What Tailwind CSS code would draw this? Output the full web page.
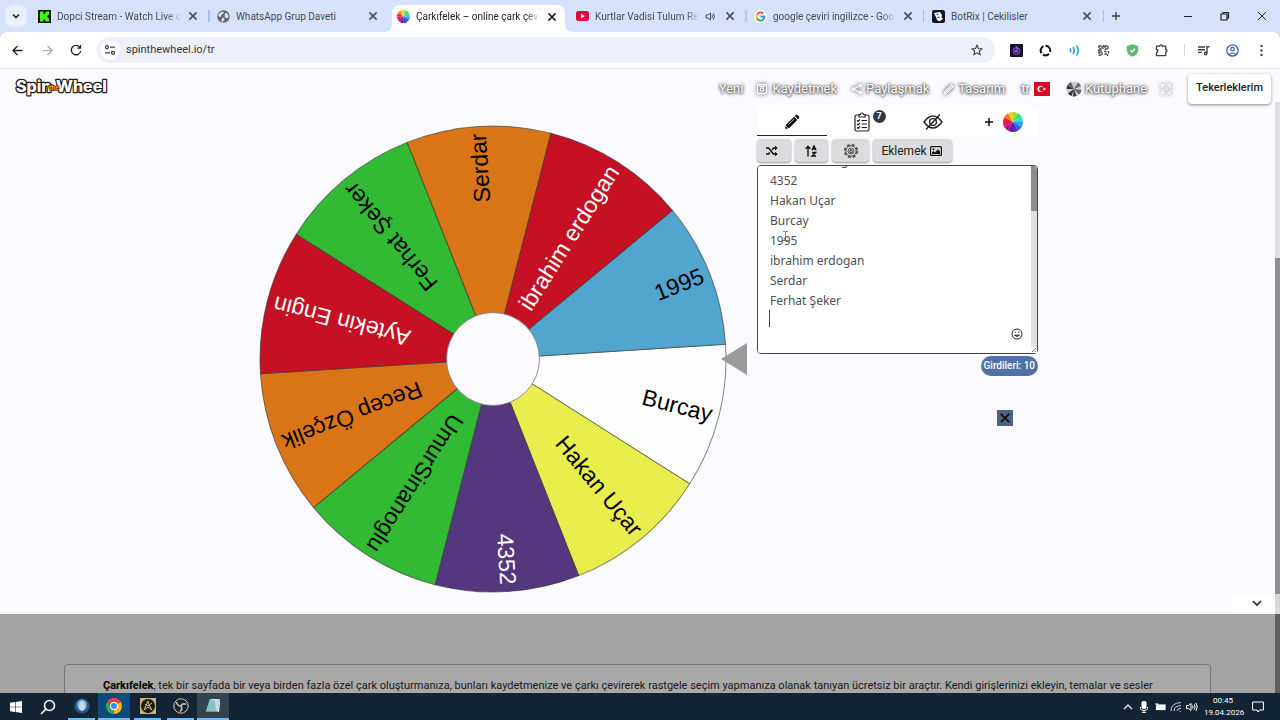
<!DOCTYPE html>
<html lang="tr">
<head>
    <meta charset="UTF-8">
    <meta name="viewport" content="width=device-width, initial-scale=1.0">
    <title>Çarkıfelek – online çark çevirme</title>
    <script src="https://cdn.jsdelivr.net/npm/@tailwindcss/browser@4"></script>
</head>
<body class="h-screen flex flex-col overflow-hidden bg-[#fafaff] font-['Roboto',sans-serif] text-[#202124]">

    <!-- shared shapes -->
    <svg class="hidden">
        <symbol id="x" viewBox="0 0 10 10"><path d="M2 2l6 6M8 2l-6 6" stroke="currentColor" stroke-width="1.3" fill="none"/></symbol>
        <symbol id="pie" viewBox="-10 -10 20 20">
            <path d="M0 0L0-10A10 10 0 0 1 5-8.66Z" fill="#9be22d"/>
            <path d="M0 0L5-8.66A10 10 0 0 1 8.66-5Z" fill="#35e07a"/>
            <path d="M0 0L8.66-5A10 10 0 0 1 10 0Z" fill="#28d8e8"/>
            <path d="M0 0L10 0A10 10 0 0 1 8.66 5Z" fill="#2f9df4"/>
            <path d="M0 0L8.66 5A10 10 0 0 1 5 8.66Z" fill="#2f62e8"/>
            <path d="M0 0L5 8.66A10 10 0 0 1 0 10Z" fill="#4a2cc8"/>
            <path d="M0 0L0 10A10 10 0 0 1-5 8.66Z" fill="#6d1a9c"/>
            <path d="M0 0L-5 8.66A10 10 0 0 1-8.66 5Z" fill="#b0128c"/>
            <path d="M0 0L-8.66 5A10 10 0 0 1-10 0Z" fill="#e0146e"/>
            <path d="M0 0L-10 0A10 10 0 0 1-8.66-5Z" fill="#ea2030"/>
            <path d="M0 0L-8.66-5A10 10 0 0 1-5-8.66Z" fill="#f47b1c"/>
            <path d="M0 0L-5-8.66A10 10 0 0 1 0-10Z" fill="#f8d22a"/>
        </symbol>
    </svg>

    <div class="shrink-0 bg-[#d6e2fb]">
    <!-- Tab strip -->
    <header class="h-8 flex items-center text-[10px] text-[#474b52]">
        <button class="ml-[5px] mr-[5px] w-[22px] h-[22px] rounded-lg bg-[#e9effc] flex items-center justify-center">
            <svg class="w-3 h-3" viewBox="0 0 12 12"><path d="M3 4.5l3 3 3-3" fill="none" stroke="#202124" stroke-width="1.6"/></svg>
        </button>
        <div class="w-[176px] h-full flex items-center pl-1.5 pr-[9px] gap-1.5">
            <svg class="w-[13px] h-[13px] shrink-0" viewBox="0 0 13 13"><path fill="#061a04" d="M0 0h13v13H0z"/><path fill="#3ff51c" d="M2 1.5h3.5v2.7h1V3h1V1.5h3.7v3.2H10v1H9v1.6h1v1h1.2v3.2H7.5V10h-1V9h-1v2.5H2z"/></svg>
            <span class="flex-1 min-w-0 overflow-hidden whitespace-nowrap [mask-image:linear-gradient(to_right,#000_88%,transparent)]">Dopci Stream - Watch Live o</span>
            <button class="w-3 h-3"><svg class="w-3 h-3"><use href="#x"/></svg></button>
        </div>
        <div class="w-[184px] h-full flex items-center pl-[9px] pr-[13px] gap-1.5 relative">
            <span class="absolute left-0 w-0.5 h-3 bg-[#a9c3f5]"></span>
            <svg class="w-[13px] h-[13px] shrink-0" viewBox="0 0 13 13"><circle cx="6.5" cy="6.5" r="6.2" fill="#5f6469"/><path fill="#d6e2fb" d="M2 3.500l3-2 2 .5-1 2-2 1v1.500L2.500 7 1.200 6zM8 3l2.500.5 1.200 2.500-.7 2-2 .3-1.500-1.800zM5 7.500l2.200.5.3 2-2 2-1.200-.6z"/></svg>
            <span class="flex-1 whitespace-nowrap">WhatsApp Grup Daveti</span>
            <button class="w-3 h-3"><svg class="w-3 h-3"><use href="#x"/></svg></button>
        </div>
        <div class="relative w-[173px] h-[27px] mt-[5px] bg-white rounded-t-lg flex items-center pl-[5px] pr-[7px] pb-[4px] gap-1.5 text-[#202124]">
            <svg class="absolute -left-2 bottom-0 w-2 h-2" viewBox="0 0 8 8"><path d="M8 0v8H0q8 0 8-8z" fill="#fff"/></svg>
            <svg class="absolute -right-2 bottom-0 w-2 h-2" viewBox="0 0 8 8"><path d="M0 0v8h8q-8 0-8-8z" fill="#fff"/></svg>
            <svg class="w-[13px] h-[13px] shrink-0"><use href="#pie"/></svg>
            <span class="flex-1 min-w-0 overflow-hidden whitespace-nowrap [mask-image:linear-gradient(to_right,#000_88%,transparent)]">Çarkıfelek – online çark çevir</span>
            <button class="w-3 h-3"><svg class="w-3 h-3"><use href="#x"/></svg></button>
        </div>
        <div class="w-[180px] h-full flex items-center pl-[11px] pr-[9px] gap-1.5">
            <svg class="w-[13px] h-[10px] shrink-0" viewBox="0 0 13 10"><rect width="13" height="10" rx="2.500" fill="#e6053c"/><path fill="#fff" d="M5 2.800v4.400L9 5z"/></svg>
            <span class="flex-1 min-w-0 overflow-hidden whitespace-nowrap [mask-image:linear-gradient(to_right,#000_88%,transparent)]">Kurtlar Vadisi Tulum Rem</span>
            <svg class="w-[11px] h-[11px] shrink-0" viewBox="0 0 11 11"><path d="M1 4v3h2l2.500 2V2L3 4z" fill="none" stroke="currentColor"/><path d="M7 4q1 1.500 0 3M8.200 2.200q2.600 3.300 0 6.600" fill="none" stroke="currentColor"/></svg>
            <button class="w-3 h-3 ml-0.5"><svg class="w-3 h-3"><use href="#x"/></svg></button>
        </div>
        <div class="w-[178px] h-full flex items-center pl-[9px] pr-[9px] gap-1.5 relative">
            <span class="absolute left-0 w-0.5 h-3 bg-[#b3c8f3]"></span>
            <svg class="w-[13px] h-[13px] shrink-0" viewBox="0 0 13 13"><circle cx="6.500" cy="6.500" r="6.500" fill="#fff"/><g fill="none" stroke-width="1.900"><path d="M9.300 3.500A4 4 0 0 0 3 4.500" stroke="#ea4335"/><path d="M3 4.500a4 4 0 0 0 0 4" stroke="#fbbc05"/><path d="M3 8.500a4 4 0 0 0 6 1.200" stroke="#34a853"/><path d="M6.500 6.500h4a4 4 0 0 1-1.500 3.200" stroke="#4285f4"/></g></svg>
            <span class="flex-1 min-w-0 overflow-hidden whitespace-nowrap [mask-image:linear-gradient(to_right,#000_88%,transparent)]">google çeviri ingilizce - Goo</span>
            <button class="w-3 h-3"><svg class="w-3 h-3"><use href="#x"/></svg></button>
        </div>
        <div class="w-[178px] h-full flex items-center pl-[9px] pr-2 gap-1.5 relative">
            <span class="absolute left-0 w-px h-3 bg-[#a9bfee]"></span>
            <svg class="w-[13px] h-[13px] shrink-0" viewBox="0 0 13 13"><rect width="13" height="13" rx="2" fill="#14142b"/><path fill="#fff" d="M2 3l6-1 2 3-.5 2L11 9l-3.500 2.200-2-.7z"/><path stroke="#14142b" d="M4.500 4.500l2-.5M5.500 7.500l2-.5"/></svg>
            <span class="flex-1 whitespace-nowrap">BotRix | Cekilisler</span>
            <button class="w-3 h-3"><svg class="w-3 h-3"><use href="#x"/></svg></button>
        </div>
        <span class="w-px h-3 ml-0.5 bg-[#a9bfee]"></span>
        <button class="ml-[7px] text-[#1f4d2e]"><svg class="w-[10px] h-[10px]" viewBox="0 0 10 10"><path d="M5 1v8M1 5h8" stroke="currentColor" stroke-width="1.300"/></svg></button>
        <div class="ml-auto mr-[13px] flex items-center gap-[27px] text-[#202124]">
            <button><svg class="w-[10px] h-[10px]" viewBox="0 0 10 10"><path d="M1 5.500h8" stroke="currentColor"/></svg></button>
            <button><svg class="w-[10px] h-[10px]" viewBox="0 0 10 10"><path d="M1 3h6v6H1zM3 3V1.500h5.500V7H7" fill="none" stroke="currentColor" stroke-width="1.200"/></svg></button>
            <button><svg class="w-[10px] h-[10px]" viewBox="0 0 10 10"><path d="M1 1l8 8M9 1L1 9" stroke="currentColor"/></svg></button>
        </div>
    </header>

    <!-- Toolbar -->
    <div class="h-[37px] bg-white rounded-t-lg border-b border-[#e6e8ee] flex items-center pl-3 pr-3 text-[#3c4043]">
        <button class="mr-[19px]"><svg class="w-[11px] h-[11px]" viewBox="0 0 11 11"><path d="M10.500 5.500H1M5.500 1L1 5.500 5.500 10" fill="none" stroke="#202124" stroke-width="1.300"/></svg></button>
        <button class="mr-[17px]"><svg class="w-[11px] h-[11px]" viewBox="0 0 11 11"><path d="M.5 5.500H10M5.500 1L10 5.500 5.500 10" fill="none" stroke="#a6a9ad" stroke-width="1.200"/></svg></button>
        <button class="mr-[15px]"><svg class="w-3 h-3" viewBox="0 0 12 12"><path d="M10 3.500A4.700 4.700 0 1 0 10.700 7M10.500 1v3.200H7.300" fill="none" stroke="#202124" stroke-width="1.300"/></svg></button>
        <div class="h-[26px] flex-1 rounded-full bg-[#edf0fa] flex items-center pl-[3px] pr-3">
            <button class="w-5 h-5 rounded-full bg-white flex items-center justify-center mr-1.5">
                <svg class="w-3 h-3" viewBox="0 0 12 12" fill="none" stroke="#3c4043" stroke-width="1.300"><circle cx="3" cy="3.200" r="1.500"/><path d="M6 3.200h5M1 8.800h5"/><circle cx="9" cy="8.800" r="1.500"/></svg>
            </button>
            <input aria-label="Adres" class="flex-1 bg-transparent outline-none text-[11px] text-[#33363b]" value="spinthewheel.io/tr">
            <svg class="w-3 h-3" viewBox="0 0 24 24" fill="none" stroke="#3c4043" stroke-width="2.200"><path d="M12 2.500l2.900 6.500 7.100.7-5.400 4.700 1.600 7L12 17.700l-6.200 3.700 1.600-7L2 9.700l7.100-.7z"/></svg>
        </div>
        <div class="ml-[15px] flex items-center gap-4">
            <svg class="w-[13px] h-[13px]" viewBox="0 0 13 13"><rect width="13" height="13" rx="1" fill="#180f33"/><circle cx="6.500" cy="7" r="3.500" fill="#40206e" stroke="#8b4fd0"/><path d="M6 2l1.500 2.500L5 7.500h3" stroke="#c58bf4" stroke-width=".8" fill="none"/></svg>
            <svg class="w-[13px] h-[13px]" viewBox="0 0 13 13" fill="none" stroke="#111" stroke-width="2"><path d="M4.500 2.100A4.800 4.800 0 0 0 2.500 9.200M6.500 1.700A4.800 4.800 0 0 1 11 8M10 9.800A4.800 4.800 0 0 1 4 10.600"/></svg>
            <svg class="w-[13px] h-[13px]" viewBox="0 0 13 13" fill="none" stroke="#2a9df0" stroke-width="1.600"><path d="M2 4.500q1.400 2 0 4M5 3q2.400 3.500 0 7M8.500 1.500q3.600 5 0 10"/></svg>
            <svg class="w-[13px] h-[13px]" viewBox="0 0 13 13" fill="none" stroke="#4a4a4a" stroke-width="1.400" stroke-dasharray="2.500 .8"><path d="M2 2h3v3H2zM8 2h3v3H8zM2 8h3v3H2z"/><path d="M6.500 1v4M1 6.500h4"/><path d="M7 7.500h2.500M11.500 7v3M7.500 10h3v2"/></svg>
            <svg class="w-[13px] h-[13px]" viewBox="0 0 13 13"><path d="M6.500.3l5.700 1.800v4.200q0 4.300-5.700 6.500Q.8 10.600.8 6.300V2.100z" fill="#5fb878"/><path d="M4.200 6.200l1.800 1.800 3-3.200" stroke="#fff" stroke-width="1.300" fill="none"/></svg>
            <svg class="w-[13px] h-[13px]" viewBox="0 0 13 13" fill="none" stroke="#3c4043" stroke-width="1.300"><path d="M1.500 2.200h3.300a1.300 1.300 0 0 1 2.600 0h3.300v3.300a1.300 1.300 0 0 1 0 2.600v3.500H1.500V8.300a1.400 1.400 0 0 0 0-2.800z"/></svg>
            <span class="w-px h-3 bg-[#cfd6e6] -mr-1"></span>
            <svg class="w-[13px] h-[13px]" viewBox="0 0 13 13" fill="none" stroke="#3c4043" stroke-width="1.400"><path d="M1 3h7M1 5.700h7M1 8.400h4M10 9.500V2.700h2.500"/><circle cx="8.600" cy="9.500" r="1.200"/></svg>
            <svg class="w-[13px] h-[13px]" viewBox="0 0 13 13" fill="none" stroke="#2b57b5" stroke-width="1.200"><circle cx="6.500" cy="6.500" r="5.700"/><circle cx="6.500" cy="5.200" r="1.800"/><path d="M3 10.500q3.500-3 7 0"/></svg>
            <svg class="w-[13px] h-[13px]" viewBox="0 0 13 13" fill="#3c4043"><circle cx="6.500" cy="2" r="1.200"/><circle cx="6.500" cy="6.500" r="1.200"/><circle cx="6.500" cy="11" r="1.200"/></svg>
        </div>
    </div>
    </div>

    <!-- Page -->
    <div class="flex-1 min-h-0 flex">
        <main class="flex-1 flex flex-col min-w-0">
            <section class="h-[545px] shrink-0 flex flex-col relative">
                <nav class="h-[39px] flex items-center pl-[15px] pr-1 text-[13px] text-white">
                    <a href="#" class="mb-1"><svg class="w-[94px] h-5" viewBox="0 0 94 20">
                        <g font-family="Inter" font-weight="800" font-size="16" fill="#fff" stroke="#1c1c1c" stroke-width="2.500" stroke-linejoin="round" paint-order="stroke"><text x="1" y="15">Spin</text><text x="41" y="15">Wheel</text></g>
                        <text x="34" y="13" font-family="Inter" font-weight="800" font-size="6" fill="#f39a1c" stroke="#3a2a10" stroke-width="1.500" paint-order="stroke">the</text>
                    </svg></a>
                    <div class="ml-auto flex items-center [text-shadow:0_0_2px_#444,0_1px_3px_#555,0_0_4px_#888]">
                        <a href="#" class="mr-[13px]">Yeni</a>
                        <a href="#" class="mr-[14px] flex items-center gap-1"><svg class="w-3 h-3 drop-shadow-[0_0_2px_#333]" viewBox="0 0 12 12" fill="none" stroke="#fff" stroke-width="1.300"><rect x="1.500" y="1.500" width="9" height="9" rx="1"/><circle cx="6" cy="6.500" r="1.700"/><path d="M4 1.500v2h4v-2"/></svg>Kaydetmek</a>
                        <a href="#" class="mr-[14px] flex items-center gap-[3px]"><svg class="w-3 h-3 drop-shadow-[0_0_2px_#333]" viewBox="0 0 12 12" fill="#fff" stroke="#fff"><path d="M9.500 2.500L2.500 6l7 3.500" fill="none" stroke-width="1.300"/><circle cx="9.500" cy="2.500" r="1.300"/><circle cx="2.500" cy="6" r="1.300"/><circle cx="9.500" cy="9.500" r="1.300"/></svg>Paylaşmak</a>
                        <a href="#" class="mr-4 flex items-center gap-[3px]"><svg class="w-3 h-3 drop-shadow-[0_0_2px_#333]" viewBox="0 0 12 12"><path d="M1.500 8.500L8.500 1.500l2 2-7 7-2.500.5z" fill="#ddd" stroke="#fff"/></svg>Tasarım</a>
                        <a href="#" class="mr-4 flex items-center gap-1">tr<svg class="w-4 h-3.5" viewBox="0 0 16 14"><path fill="#d30d24" d="M0 0h16v14H0z"/><circle cx="6.500" cy="7" r="3" fill="#fff"/><circle cx="7.300" cy="7" r="2.300" fill="#d30d24"/><path fill="#fff" d="M10.500 5.500l.4 1.100h1.200l-1 .8.400 1.100-1-.7-1 .7.400-1.100-1-.8h1.200z"/></svg></a>
                        <a href="#" class="mr-[13px] flex items-center gap-[3px]"><svg class="w-4 h-4" viewBox="-8 -8 16 16"><circle r="7.500" fill="#c9c9c9"/><path fill="#333" d="M0 0L-7.500 0A7.500 7.500 0 0 1-6.500-3.700zM0 0L-2.500 7A7.500 7.500 0 0 1-6 4.500zM0 0L2.500 7.100A7.500 7.500 0 0 1-1 7.500z"/><path fill="#666" d="M0 0L7.500 1A7.500 7.500 0 0 1 5 5.600zM0 0L-6.500-3.700A7.500 7.500 0 0 1-3-7zM0 0L4-6.400A7.500 7.500 0 0 1 7-3z"/></svg>Kütüphane</a>
                        <a href="#" aria-label="Tam ekran"><svg class="w-3 h-3 drop-shadow-[0_0_2px_#333]" viewBox="0 0 12 12" fill="none" stroke="#fff" stroke-width="1.500"><path d="M2 4.500v-2.500h2.500M7.500 2h2.500v2.500M10 7.500v2.500h-2.500M4.500 10h-2.500v-2.500"/></svg></a>
                    </div>
                    <button class="ml-4 h-[30px] px-2 rounded bg-white text-[#222] text-[11px] font-medium shadow-[0_1px_3px_rgba(0,0,0,.45)]">Tekerleklerim</button>
                </nav>

                <div class="flex justify-center items-start pl-[22px]">
                    <!-- Wheel -->
                    <svg class="w-[490px] h-[470px] mt-4" viewBox="-234 -235 490 470" font-family="'Liberation Sans',Arial,sans-serif" font-size="23">
                        <g id="slices" stroke="#333" stroke-opacity=".6"></g>
                        <circle r="46.500" fill="#fafaff" stroke="#777" stroke-width=".8"/>
                        <path d="M228 0l26-16v32z" fill="#9a9a9a"/>
                    </svg>

                    <!-- Entries panel -->
                    <div class="w-[281px] ml-2">
                        <div class="h-7 bg-white grid grid-cols-4">
                            <button class="border-b border-[#222] flex items-center justify-center"><svg class="w-4 h-4" viewBox="0 0 16 16"><path d="M1 15l1-4.300 8-8 3.300 3.300-8 8zM10.800 1.900l1-1q.8-.6 1.600.1l1.600 1.600q.7.800.1 1.600l-1 1z" fill="#111"/><path d="M4.500 10.500l5.500-5.500M2.200 12.300l1.500 1.500" stroke="#fff" stroke-width=".7"/></svg></button>
                            <button class="flex items-center justify-center relative">
                                <svg class="w-5 h-5" viewBox="0 0 20 20" fill="none" stroke="#222" stroke-width="1.200"><rect x="3" y="3" width="14" height="16" rx="1.500"/><path fill="#fff" d="M7 2.500h1.500a1.500 1.500 0 0 1 3 0H13v2.500H7z"/><path d="M9.500 8.500H15M9.500 12H15M9.500 15.500H15M5 8.500l1 1 2-2M5 12l1 1 2-2M5 15.500l1 1 2-2"/></svg>
                                <span class="absolute right-3 top-0.5 w-[13px] h-[13px] rounded-full bg-[#2f3a40] text-white text-[9px] font-bold leading-[13px]">7</span>
                            </button>
                            <button class="flex items-center justify-center"><svg class="w-5 h-4" viewBox="0 0 20 16" fill="none" stroke="#222" stroke-width="1.400"><path d="M1 8q9-12 18 0-9 12-18 0z"/><circle cx="10" cy="8" r="3.400"/><path d="M3 15.500L17 .5"/></svg></button>
                            <button class="flex items-center justify-center gap-[9px] pl-0.5"><svg class="w-[10px] h-[10px]" viewBox="0 0 10 10"><path d="M5 1v8M1 5h8" stroke="#111" stroke-width="1.500"/></svg><svg class="w-5 h-5"><use href="#pie"/></svg></button>
                        </div>
                        <div class="flex gap-1 mt-[3px] text-[#222]">
                            <button class="w-[34px] h-[23px] rounded-sm bg-[#dcdcdf] shadow-[0_1px_2px_rgba(0,0,0,.4)] flex items-center justify-center pr-1"><svg class="w-3 h-3" viewBox="0 0 12 12" fill="none" stroke="#111" stroke-width="1.600"><path d="M0 3h2.500l5 6H10M0 9h2.500l1.300-1.600M6 4.800L7.500 3H10"/><path d="M9 .8L11.800 3 9 5.200zM9 6.800L11.800 9 9 11.200z" fill="#111" stroke="none"/></svg></button>
                            <button class="w-[33px] h-[23px] rounded-sm bg-[#dcdcdf] shadow-[0_1px_2px_rgba(0,0,0,.4)] flex items-center justify-center pr-0.5"><svg class="w-3 h-3" viewBox="0 0 12 12" fill="none" stroke="#111" stroke-width="1.400"><path d="M3 11.500V1.500M.7 3.700L3 1.300l2.300 2.400M7 5.300L9 .8l2 4.500M7.600 4h2.800M7 7.500h3.500L7.200 11H11"/></svg></button>
                            <button class="w-[37px] h-[23px] rounded-sm bg-[#dcdcdf] shadow-[0_1px_2px_rgba(0,0,0,.4)] flex items-center justify-center"><svg class="w-4 h-4" viewBox="0 0 16 16" fill="none" stroke="#555"><circle cx="8" cy="8" r="6.200" stroke-width="2" stroke-dasharray="2.900 1.970"/><circle cx="8" cy="8" r="5.200"/><circle cx="8" cy="8" r="3"/><path d="M6.800 7.500h2.400v2H6.800zM7.300 7.500V6.600h1.400v.9"/></svg></button>
                            <button class="w-[79px] h-[23px] rounded-sm bg-[#dcdcdf] shadow-[0_1px_2px_rgba(0,0,0,.4)] flex items-center justify-center gap-[3px] pr-0.5 text-[12px]">Eklemek<svg class="w-3 h-3" viewBox="0 0 12 12"><rect x=".6" y="1.600" width="10.800" height="8.800" rx="1" fill="none" stroke="#111" stroke-width="1.200"/><circle cx="3.500" cy="4.300" r="1" fill="#111"/><path d="M2 9V7.500l1.500-1.500L5 7.500 8 4.300l2 2.200V9z" fill="#111"/></svg></button>
                        </div>
                        <div class="relative mt-[3px]">
                            <textarea id="entries" aria-label="Girdiler" spellcheck="false" class="block w-full h-[189px] resize-none rounded border border-[#444] bg-white pl-3 pr-3 pb-6 pt-0 text-[12px] leading-5 text-[#505050] outline-none font-['Noto_Sans',sans-serif] [scrollbar-width:none]">Aytekin Engin
Recep Özçelik
UmurSinanoglu
4352
Hakan Uçar
Burcay
1995
ibrahim erdogan
Serdar
Ferhat Şeker
</textarea>
                            <span class="absolute left-3 top-[145px] block w-px h-[17px] bg-[#444]"></span>
                            <svg class="absolute left-[25px] top-[66px] w-[7px] h-[10px]" viewBox="0 0 7 10"><path d="M1 .5h2l.5.5.5-.5h2M3.500 1v8M1 9.500h2l.5-.5.5.5h2" fill="none" stroke="#666" stroke-width=".8"/></svg>
                            <div class="absolute right-px top-px bottom-px w-[6px] bg-[#e2e2e2] rounded-r-sm"><div class="h-[45px] bg-[#8d8d8d] rounded-tr-sm"></div></div>
                            <svg class="absolute right-px bottom-px w-1.5 h-1.5 bg-white" viewBox="0 0 6 6"><path d="M1 5l4-4M4 5l1-1" stroke="#555" stroke-width=".8"/></svg>
                            <button aria-label="Emoji" class="absolute right-[15px] bottom-[14px]"><svg class="w-3 h-3" viewBox="0 0 12 12" fill="none" stroke="#222"><circle cx="6" cy="6" r="5"/><path d="M3.500 7.200q2.500 2.600 5 0z"/><path d="M4.200 3.800V5M7.800 3.800V5"/></svg></button>
                        </div>
                        <div class="flex justify-end mt-0.5"><span class="h-5 px-[3px] rounded-full bg-[#5071a8] text-white text-[10px] font-medium leading-5">Girdileri: 10</span></div>
                        <div class="flex justify-end mt-[34px] pr-[25px]"><button aria-label="Kapat" class="w-4 h-4 bg-[#4d6183] text-[#111] flex items-center justify-center"><svg class="w-[14px] h-[14px]"><use href="#x"/></svg></button></div>
                    </div>
                </div>
                <button aria-label="Aşağı" class="absolute right-0 bottom-0 w-[44px] h-5 bg-white rounded-tl-md flex items-center justify-center pl-2"><svg class="w-3 h-3 mb-0.5" viewBox="0 0 12 12"><path d="M2 4l4 4 4-4" fill="none" stroke="#222" stroke-width="1.600"/></svg></button>
            </section>

            <section class="flex-1 min-h-0 overflow-hidden bg-[#a4a4a5] px-16 pt-[50px]">
                <div class="h-20 rounded border border-[#777] bg-[#a8a8a8] px-[38px] pt-[11px] text-[11px] leading-5 text-[#1a1a1a] whitespace-nowrap">
                    <p><b class="text-black">Çarkıfelek</b>, tek bir sayfada bir veya birden fazla özel çark oluşturmanıza, bunları kaydetmenize ve çarkı çevirerek rastgele seçim yapmanıza olanak tanıyan ücretsiz bir araçtır. Kendi girişlerinizi ekleyin, temalar ve sesler</p>
                </div>
            </section>
        </main>
        <!-- page scrollbar, darker where it runs past the overlay -->
        <div class="w-[5px] flex flex-col bg-[#5f6062]">
            <div class="h-[33px] bg-[#fafaff]"></div>
            <div class="h-[156px] bg-[#dfdfe0]"></div>
            <div class="h-[336px] bg-[#8f8f90]"></div>
            <div class="h-5 bg-[#d8d8d8]"></div>
        </div>
    </div>

    <!-- Taskbar -->
    <footer class="h-[27px] shrink-0 bg-[#132534] flex items-center text-white">
        <button class="w-8 flex justify-center"><svg class="w-3 h-3" viewBox="0 0 12 12" fill="#fff"><path d="M0 1.700l5-.7v4.700H0zM5.600.9L12 0v5.700H5.600zM0 6.300h5V11l-5-.7zM5.600 6.300H12V12l-6.400-.9z"/></svg></button>
        <button class="w-8 flex justify-center"><svg class="w-4 h-4" viewBox="0 0 16 16" fill="none" stroke="#fff" stroke-width="1.600"><circle cx="9.500" cy="6.500" r="5"/><path d="M6 10l-5 5"/></svg></button>
        <button class="ml-1 w-[27px] mr-[3px] h-full border-b-2 border-[#76b9ed] flex items-center justify-center"><svg class="w-4 h-4" viewBox="0 0 16 16"><circle cx="8" cy="8" r="7.600" fill="#24578a"/><ellipse cx="8" cy="7" rx="5" ry="5.500" fill="#7fa9d2"/><ellipse cx="8" cy="8" rx="3" ry="5" fill="#c5d9ea"/></svg></button>
        <button class="w-8 h-full border-b-2 border-[#76b9ed] bg-[#0f4a7c] flex items-center justify-center"><svg class="w-4 h-4" viewBox="-8 -8 16 16"><path fill="#ea4335" d="M0 0L-6.900-4A8 8 0 0 1 6.900-4z"/><path fill="#fbbc05" d="M0 0L6.900-4A8 8 0 0 1 0 8z"/><path fill="#34a853" d="M0 0L0 8A8 8 0 0 1-6.900-4z"/><circle r="3.900" fill="#fff"/><circle r="3" fill="#4285f4"/></svg></button>
        <button class="ml-1 mr-1.5 w-[27px] h-full border-b-2 border-[#76b9ed] flex items-center justify-center"><svg class="w-4 h-4" viewBox="0 0 16 16"><path fill="#c9b071" d="M0 0h16v16H0z"/><circle cx="8" cy="8" r="7" fill="#1c1a16"/><path d="M4 12l4-9 1 4 3 5-4-3zM5 6l3 2 4-3" fill="none" stroke="#d8be7c"/></svg></button>
        <button class="mr-[3px] w-[27px] h-full border-b-2 border-[#76b9ed] flex items-center justify-center"><svg class="w-4 h-4" viewBox="0 0 16 16"><circle cx="8" cy="8" r="7.200" fill="#222226" stroke="#ccc"/><path d="M8 8q-4 0-4.500-4M8 8q2-3.500 5-1.500M8 8q2 3-1 5.500" fill="none" stroke="#bbb" stroke-width="1.700"/></svg></button>
        <button class="w-8 h-full border-b-2 border-[#76b9ed] bg-[#34444f] flex items-center justify-center"><svg class="w-4 h-4" viewBox="0 0 16 16"><path fill="#b9e3e4" d="M5 1h10l-3 12.500H1z"/><path fill="#63aeb4" d="M1 13.500L5 1l5 2 1 10.500z" opacity=".6"/><path fill="#eef" d="M15 1l-3 12.500 2 .5 1-9z"/></svg></button>
        <div class="ml-auto flex items-center gap-1">
            <svg class="w-3 h-3" viewBox="0 0 12 12"><path d="M2 8l4-4 4 4" fill="none" stroke="#fff" stroke-width="1.200"/></svg>
            <svg class="w-3 h-3" viewBox="0 0 12 12"><rect x="3.500" y="0" width="5" height="8" rx="2" fill="#fff"/><path d="M2.500 6v1.500q0 2 3.500 2t3.500-2V6M6 9v2.500M4 11.500h4" fill="none" stroke="#fff"/></svg>
            <svg class="w-3 h-3" viewBox="0 0 12 12" fill="none" stroke="#fff" stroke-width="1.200"><path d="M3 5V3.500M1 3h3.500"/><rect x="3.500" y="4" width="7.500" height="4.500" fill="#fff"/><path d="M2.500 5v4"/></svg>
            <svg class="w-3 h-3" viewBox="0 0 12 12" fill="none" stroke="#ccd" ><path d="M1 10q0-8 10-8.500M4 10q0-5 7-5.500M7 10q0-2.500 4-2.700M9.500 10.500h1"/></svg>
            <svg class="w-3 h-3" viewBox="0 0 12 12" fill="none" stroke="#fff"><path d="M.5 4.500v3h2L5 9.500v-7L2.500 4.500zM6.500 4.500q1 1.500 0 3M8.200 3.300q1.800 2.700 0 5.400M10 2q2.500 4 0 8"/></svg>
        </div>
        <div class="ml-1.5 w-[38px] text-center text-[8px] leading-3 whitespace-nowrap"><div>00:45</div><div>19.04.2026</div></div>
        <button class="ml-2.5 mr-4"><svg class="w-3 h-3" viewBox="0 0 12 12"><path d="M.6 1h10.800v8H7.500L6 11 5 9H.6z" fill="none" stroke="#fff"/></svg></button>
    </footer>

    <script>
        const entries = [
            ['Burcay', '#fefefe', '#000'],
            ['Hakan Uçar', '#e8ef4c', '#000'],
            ['4352', '#53387f', '#fff'],
            ['UmurSinanoglu', '#32ba35', '#000'],
            ['Recep Özçelik', '#d97516', '#000'],
            ['Aytekin Engin', '#c61024', '#fff'],
            ['Ferhat Şeker', '#32ba35', '#000'],
            ['Serdar', '#d97516', '#000'],
            ['ibrahim erdogan', '#c61024', '#fff'],
            ['1995', '#52a5cf', '#000'],
        ];
        const R = 233;
        const step = 360 / entries.length;
        const half = step / 2 * Math.PI / 180;
        const x = R * Math.cos(half), y = R * Math.sin(half);

        // every slice is drawn pointing right, then turned to its place
        document.getElementById('slices').innerHTML = entries.map(([name, bg, color], i) => `
            <g transform="rotate(${14.4 + i * step})">
                <path d="M0 0L${x} ${-y}A${R} ${R} 0 0 1 ${x} ${y}Z" fill="${bg}"/>
                <text x="226" y="7" text-anchor="end" fill="${color}" stroke="none">${name}</text>
            </g>`).join('');

        document.getElementById('entries').scrollTop = 55;
    </script>
</body>
</html>
